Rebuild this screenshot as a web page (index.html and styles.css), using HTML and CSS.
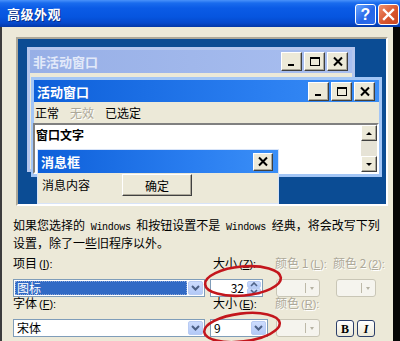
FILE: index.html
```html
<!DOCTYPE html>
<html lang="zh-CN">
<head>
<meta charset="utf-8">
<title>高级外观</title>
<link rel="stylesheet" href="styles.css">
</head>
<body>
<div class="dlg">
  <div class="titlebar">
    <span class="title">高级外观</span>
    <div class="tb-btns">
      <span class="tb-help">?</span>
      <span class="tb-close"><svg width="13" height="13" viewBox="0 0 13 13"><path d="M2 2 L11 11 M11 2 L2 11" stroke="#fff" stroke-width="2.4" stroke-linecap="square"/></svg></span>
    </div>
  </div>
  <div class="frame">
    <div class="edge-l"></div>
    <div class="content">
      <div class="preview">
        <div class="win inactive">
          <div class="cap cap-in">
            <span class="cap-text">非活动窗口</span>
            <div class="capbtns">
              <span class="cbtn"><svg width="12" height="11" viewBox="0 0 12 11"><rect x="2" y="8" width="6" height="2" fill="#000"/></svg></span>
              <span class="cbtn"><svg width="12" height="11" viewBox="0 0 12 11"><rect x="1.5" y="1.5" width="9" height="8" fill="none" stroke="#000" stroke-width="1"/><rect x="1" y="1" width="10" height="2" fill="#000"/></svg></span>
              <span class="cbtn"><svg width="12" height="11" viewBox="0 0 12 11"><path d="M2 1.5 L10 9.5 M10 1.5 L2 9.5" stroke="#000" stroke-width="2"/></svg></span>
            </div>
          </div>
        </div>
        <div class="win active">
          <div class="cap cap-act">
            <span class="cap-text">活动窗口</span>
            <div class="capbtns">
              <span class="cbtn"><svg width="12" height="11" viewBox="0 0 12 11"><rect x="2" y="8" width="6" height="2" fill="#000"/></svg></span>
              <span class="cbtn"><svg width="12" height="11" viewBox="0 0 12 11"><rect x="1.5" y="1.5" width="9" height="8" fill="none" stroke="#000" stroke-width="1"/><rect x="1" y="1" width="10" height="2" fill="#000"/></svg></span>
              <span class="cbtn"><svg width="12" height="11" viewBox="0 0 12 11"><path d="M2 1.5 L10 9.5 M10 1.5 L2 9.5" stroke="#000" stroke-width="2"/></svg></span>
            </div>
          </div>
          <div class="menu">
            <span>正常</span>
            <span class="dis">无效</span>
            <span>已选定</span>
          </div>
          <div class="textbox">
            <span class="wtext">窗口文字</span>
            <div class="vscroll">
              <span class="sbtn"><svg width="8" height="5" viewBox="0 0 8 5"><path d="M4 1 L7 4 L1 4 Z" fill="#000"/></svg></span>
              <span class="strack"></span>
              <span class="sbtn"><svg width="8" height="5" viewBox="0 0 8 5"><path d="M1 1 L7 1 L4 4 Z" fill="#000"/></svg></span>
            </div>
          </div>
        </div>
        <div class="win msg">
          <div class="cap cap-act cap-msg">
            <span class="cap-text">消息框</span>
            <span class="cbtn cbtn-msg"><svg width="12" height="11" viewBox="0 0 12 11"><path d="M2 1.5 L10 9.5 M10 1.5 L2 9.5" stroke="#000" stroke-width="2"/></svg></span>
          </div>
          <div class="msgbody">
            <span class="msgtext">消息内容</span>
            <span class="okbtn">确定</span>
          </div>
        </div>
      </div>

      <p class="desc">如果您选择的<span class="mono"> Windows </span>和按钮设置不是<span class="mono"> Windows </span>经典，将会改写下列<br>设置，除了一些旧程序以外。</p>

      <div class="form">
        <span class="lbl">项目<span class="acc">(<u>I</u>):</span></span>
        <span class="lbl lbl-size">大小<span class="acc">(<u>Z</u>):</span></span>
        <span class="lbl dis">颜色 1<span class="acc">(<u>L</u>):</span></span>
        <span class="lbl dis">颜色 2<span class="acc">(<u>2</u>):</span></span>

        <div class="combo c-item">
          <span class="val sel">图标</span>
          <span class="arrow"><svg width="9" height="6" viewBox="0 0 9 6"><path d="M1 1 L4.5 4.5 L8 1" fill="none" stroke="#4d6185" stroke-width="2"/></svg></span>
        </div>
        <div class="combo c-size">
          <span class="val num">32</span>
          <span class="spin">
            <span class="sp"><svg width="8" height="5" viewBox="0 0 8 5"><path d="M1 4 L4 1 L7 4" fill="none" stroke="#4d6185" stroke-width="1.6"/></svg></span>
            <span class="sp"><svg width="8" height="5" viewBox="0 0 8 5"><path d="M1 1 L4 4 L7 1" fill="none" stroke="#4d6185" stroke-width="1.6"/></svg></span>
          </span>
        </div>
        <div class="colorbtn c1"><span class="sw"></span><span class="sep"></span><span class="tri"></span></div>
        <div class="colorbtn c2"><span class="sw"></span><span class="sep"></span><span class="tri"></span></div>

        <span class="lbl">字体<span class="acc">(<u>F</u>):</span></span>
        <span class="lbl lbl-size">大小<span class="acc">(<u>E</u>):</span></span>
        <span class="lbl dis">颜色<span class="acc">(<u>R</u>):</span></span>
        <span></span>

        <div class="combo c-item">
          <span class="val">宋体</span>
          <span class="arrow"><svg width="9" height="6" viewBox="0 0 9 6"><path d="M1 1 L4.5 4.5 L8 1" fill="none" stroke="#4d6185" stroke-width="2"/></svg></span>
        </div>
        <div class="combo c-fsize">
          <span class="val">9</span>
          <span class="arrow"><svg width="9" height="6" viewBox="0 0 9 6"><path d="M1 1 L4.5 4.5 L8 1" fill="none" stroke="#4d6185" stroke-width="2"/></svg></span>
        </div>
        <div class="colorbtn c1"><span class="sw"></span><span class="sep"></span><span class="tri"></span></div>
        <div class="styles">
          <span class="tbtn b">B</span>
          <span class="tbtn i">I</span>
        </div>
      </div>
    </div>
    <div class="edge-r"></div>
  </div>
  <svg class="marks" width="400" height="341" viewBox="0 0 400 341">
    <ellipse cx="243" cy="281" rx="38" ry="14.5" transform="rotate(-5 243 281)" fill="none" stroke="#c3161d" stroke-width="2.6"/>
    <ellipse cx="242" cy="327.5" rx="38" ry="14" transform="rotate(-7 242 327.5)" fill="none" stroke="#c3161d" stroke-width="2.6"/>
  </svg>
</div>
</body>
</html>
```
FILE: styles.css
```css
* { box-sizing: border-box; margin: 0; padding: 0; }
html, body { width: 400px; height: 341px; overflow: hidden; }
body {
  font-family: "Noto Sans CJK SC", "Noto Sans", sans-serif;
  font-size: 12px;
  color: #000;
  background: #000;
}
.dlg {
  width: 400px;
  height: 341px;
  display: flex;
  flex-direction: column;
  position: relative;
  overflow: hidden;
}

/* Title bar */
.titlebar {
  height: 27px;
  flex: none;
  display: flex;
  align-items: center;
  justify-content: space-between;
  padding-left: 7px;
  padding-right: 1px;
  background: linear-gradient(#4a92fa 0, #1a6cee 3px, #0b5be6 8px, #0655df 17px, #0549cc 23px, #0338a6 27px);
}
.title {
  color: #fff;
  font-weight: bold;
  font-size: 13px;
  letter-spacing: 0.5px;
  line-height: 1;
  text-shadow: 1px 1px 0 #0a2e86;
}
.tb-btns {
  display: flex;
  gap: 2px;
  align-self: flex-start;
  margin-top: 4px;
}
.tb-help, .tb-close {
  width: 21px;
  height: 21px;
  border: 1px solid #fff;
  border-radius: 3px;
  display: flex;
  align-items: center;
  justify-content: center;
}
.tb-help {
  background: linear-gradient(135deg, #6aa6ff, #2566e8 55%, #2d6cea);
  color: #fff;
  font: bold 16px "Liberation Sans", sans-serif;
}
.tb-close {
  background: linear-gradient(135deg, #f0916f, #d8562e 55%, #c84521);
}

/* Frame */
.frame { flex: 1; display: flex; }
.edge-l { width: 2px; background: #3c3c3c; }
.edge-r { width: 7px; background: #060606; }
.content {
  flex: 1;
  background: #ECE9D8;
  padding: 10px 0 0 11px;
}

/* Preview (windows on a desktop) */
.preview {
  position: relative;
  width: 372px;
  height: 169px;
  margin-left: 3px;
  background: #0b4c94;
  border: 2px solid;
  border-color: #aca899 #fff #fff #aca899;
}
.win {
  position: absolute;
  background: #ECE9D8;
  display: flex;
  flex-direction: column;
}
.inactive {
  left: 9px; top: 8px; width: 328px; height: 125px;
  border: 3px solid #b4c6ee;
}
.active {
  left: 13px; top: 38px; width: 351px; height: 100px;
  border: 3px solid #a3c6f6;
}
.msg {
  left: 19px; top: 110px; width: 242px; height: 55px;
  border: 1px solid #d8e4f8;
}
.cap {
  display: flex;
  align-items: center;
  justify-content: space-between;
  padding: 0 4px 0 3px;
  flex: none;
}
.cap-text {
  font-weight: bold;
  font-size: 13px;
  line-height: 1;
}
.cap-in {
  height: 23px;
  background: linear-gradient(to right, #97afe6, #a9bff0);
  color: #e2e9f9;
}
.cap-act {
  height: 22px;
  background: linear-gradient(to right, #0d5fd9, #2a7ef0 65%, #3b8ff7);
  color: #fff;
}
.cap-msg { height: 23px; padding-right: 5px; }
.capbtns { display: flex; gap: 2px; }
.cbtn {
  width: 21px;
  height: 19px;
  background: #ECE9D8;
  border: 1px solid;
  border-color: #fff #404040 #404040 #fff;
  box-shadow: inset -1px -1px 0 #aca899;
  display: flex;
  align-items: center;
  justify-content: center;
}
.cbtn-msg { width: 20px; height: 18px; }

.menu {
  height: 21px;
  display: flex;
  align-items: center;
  gap: 11px;
  padding-left: 1px;
  flex: none;
}
.dis { color: #aca899; text-shadow: 1px 1px 0 #fff; }

.textbox {
  flex: 1;
  background: #fff;
  border: 2px solid;
  border-color: #808080 #fff #fff #808080;
  display: flex;
  justify-content: space-between;
  margin-left: -1px;
}
.wtext {
  font-weight: bold;
  padding: 3px 0 0 1px;
  line-height: 14px;
}
.vscroll {
  width: 16px;
  display: flex;
  flex-direction: column;
}
.sbtn {
  height: 16px;
  background: #ECE9D8;
  border: 1px solid;
  border-color: #fff #404040 #404040 #fff;
  box-shadow: inset -1px -1px 0 #aca899;
  display: flex;
  align-items: center;
  justify-content: center;
}
.strack {
  flex: 1;
  background: #e6e3d6;
}

.msgbody {
  flex: 1;
  display: flex;
  align-items: flex-start;
  padding: 1px 0 0 4px;
  gap: 32px;
}
.msgtext { line-height: 14px; margin-top: 4px; }
.okbtn {
  width: 70px;
  height: 22px;
  background: #ECE9D8;
  border: 1px solid;
  border-color: #fff #404040 #404040 #fff;
  box-shadow: inset -1px -1px 0 #aca899;
  display: flex;
  align-items: center;
  justify-content: center;
}

/* Description */
.desc {
  margin-top: 11px;
  line-height: 15px;
  white-space: nowrap;
}
.mono {
  font-family: "Liberation Mono", monospace;
  font-size: 10px;
  letter-spacing: -0.3px;
}

/* Form */
.form {
  margin-top: 8px;
  display: grid;
  grid-template-columns: 197px 65px 58px 1fr;
  grid-template-rows: 21px 19px 21px 18px;
  align-items: start;
}
.lbl { line-height: 14px; white-space: nowrap; margin-top: -2px; }
.lbl-size { padding-left: 3px; }
.acc { margin-left: 2px; font-family: "Liberation Sans", sans-serif; font-size: 11px; }

.combo {
  height: 18px;
  display: flex;
  align-items: stretch;
  border: 1px solid #7f9db9;
  background: #fff;
  padding: 1px;
}
.c-item { width: 192px; }
.c-size { width: 53px; }
.c-fsize { width: 58px; }
.val {
  flex: 1;
  display: flex;
  align-items: center;
  padding-left: 2px;
  line-height: 1;
}
.val.sel {
  background: #316ac5;
  color: #fff;
  outline: 1px dotted #8aa6d8;
  outline-offset: -1px;
  margin-right: 1px;
}
.val.num { justify-content: flex-end; padding-right: 3px; }
.arrow {
  width: 15px;
  background: linear-gradient(#cddcfd, #b3c9f7);
  border: 1px solid #b8cbf3;
  border-radius: 2px;
  display: flex;
  align-items: center;
  justify-content: center;
}
.spin {
  width: 14px;
  display: flex;
  flex-direction: column;
  gap: 0;
}
.sp {
  flex: 1;
  background: linear-gradient(#cddcfd, #b3c9f7);
  border: 1px solid #b8cbf3;
  border-radius: 2px;
  display: flex;
  align-items: center;
  justify-content: center;
}

.colorbtn {
  height: 18px;
  display: flex;
  align-items: center;
  border: 1px solid #c9c6b6;
  border-radius: 3px;
  background: #f5f4ee;
  padding: 0 5px 0 4px;
}
.colorbtn.c1 { width: 44px; margin-left: 1px; }
.colorbtn.c2 { width: 40px; margin-left: 3px; }
.sw { flex: 1; }
.sep { width: 1px; height: 10px; background: #bdb9a8; margin-right: 4px; }
.tri {
  width: 0; height: 0;
  border-left: 2.5px solid transparent;
  border-right: 2.5px solid transparent;
  border-top: 3px solid #b5b2a3;
}

.styles {
  display: flex;
  gap: 3px;
  margin-left: 3px;
  margin-top: 1px;
}
.tbtn {
  width: 18px;
  height: 17px;
  border: 1px solid #2c3f6a;
  border-radius: 3px;
  background: linear-gradient(#fff, #ece9d8);
  display: flex;
  align-items: center;
  justify-content: center;
  font-family: "Liberation Serif", serif;
  font-size: 12px;
  line-height: 1;
}
.tbtn.b { font-weight: bold; }
.tbtn.i { font-style: italic; font-weight: bold; }

.marks {
  position: absolute;
  left: 0;
  top: 0;
  pointer-events: none;
}
```
